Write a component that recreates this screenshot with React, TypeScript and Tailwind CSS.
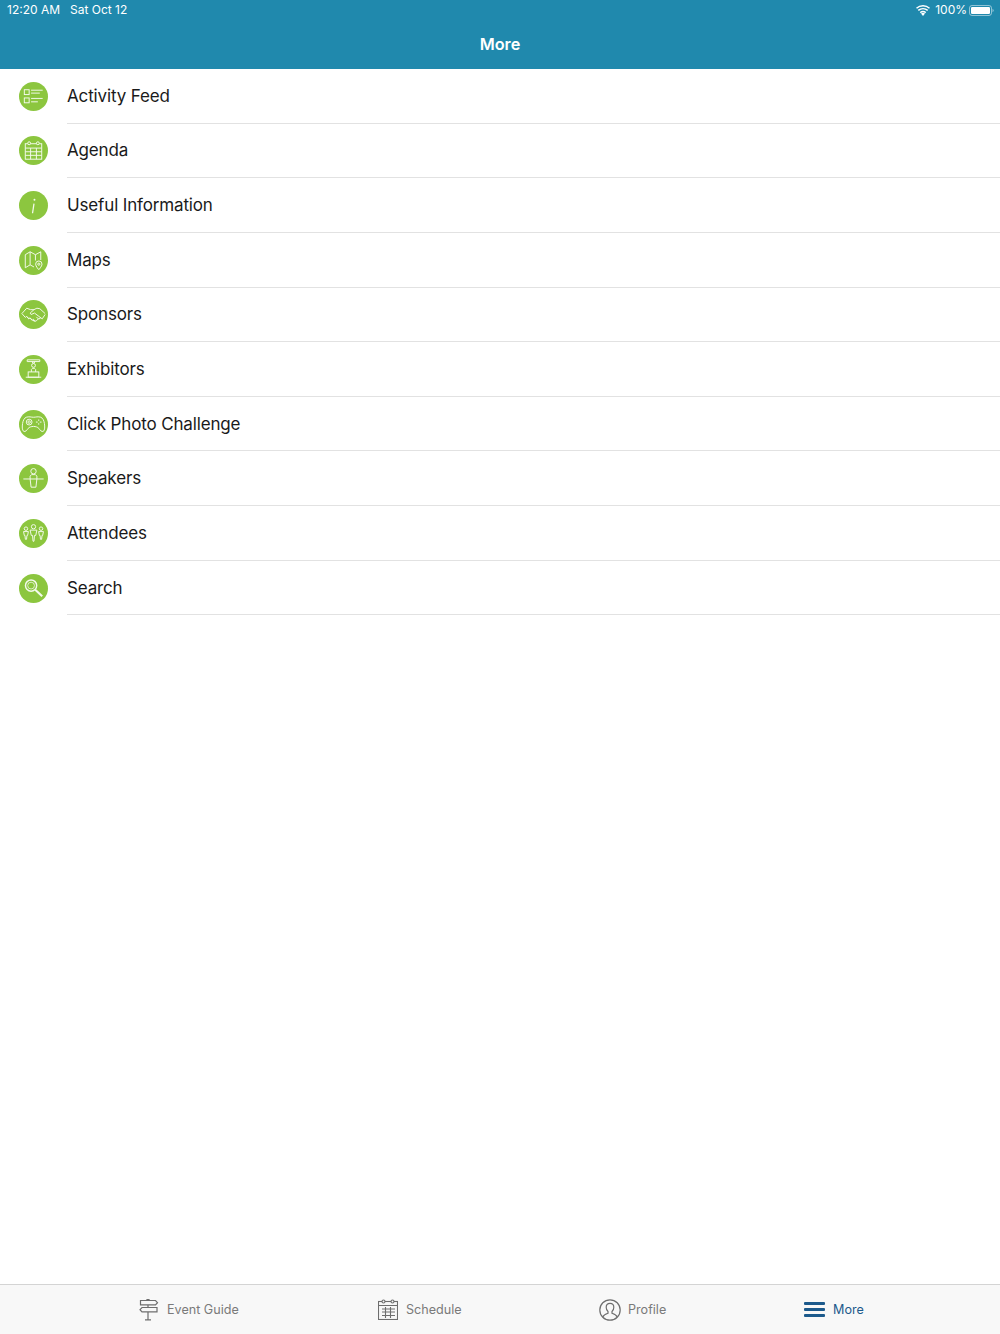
import React from "react";

const s = { fill: "none", stroke: "#fff", strokeWidth: 1, opacity: 0.9 };

function FeedIcon() {
  return (
    <g {...s}>
      <rect x="5.500" y="8" width="5" height="5" />
      <rect x="5.500" y="16.500" width="5" height="5" />
      <path d="M12.500 8.500h12M12.500 11.500h9M12.500 17h12M12.500 20.500h7" />
    </g>
  );
}

function AgendaIcon() {
  return (
    <g {...s}>
      <rect x="6.500" y="8" width="17" height="16" />
      <path d="M6.500 12.500h17M6.500 16.300h17M6.500 20h17M12 12.500v11.500M18 12.500v11.500" />
      <circle cx="10.500" cy="7.500" r="1.500" fill="#8cc63f" />
      <circle cx="19.500" cy="7.500" r="1.500" fill="#8cc63f" />
    </g>
  );
}

function InfoIcon() {
  return (
    <g>
      <path d="M15.500 13 L14 23" stroke="#fff" strokeWidth="1.300" opacity="0.9" fill="none" />
      <circle cx="16" cy="9" r="1" fill="#fff" opacity="0.9" />
    </g>
  );
}

function MapIcon() {
  return (
    <g {...s}>
      <path d="M6.500 9l5-3 5.500 3 5.500-3v8.500M6.500 9v13.500l5-3 4 2.200M11.500 6v13.500M17 9v6" />
      <path d="M20.500 15.500a3.300 3.300 0 0 1 3.300 3.300c0 2.200-3.300 5.700-3.300 5.700s-3.300-3.500-3.300-5.700a3.300 3.300 0 0 1 3.300-3.300z" />
      <circle cx="20.500" cy="18.800" r="1.100" />
    </g>
  );
}

function HandshakeIcon() {
  return (
    <g {...s}>
      <path d="M3 14l5-5.500 4 1.500h3.500l3-1.500 3 .5 5.500 5" />
      <path d="M15.500 10l-4 3.500 1 1.500 3.500-1.500 8 6 3-4.500" />
      <path d="M3 14l3.500 4 1.500-1 2 2.500 1.500-1 2 2.500 1.500-1 1.500 2 1.500-.5 2-2 2.500-1" />
      <path d="M8 17l2.500 2.500M11.500 18.500l2 2.500M14.500 20.500l1.500 2M18 17.500l2.500 2.500" />
    </g>
  );
}

function ExhibitorIcon() {
  return (
    <g {...s}>
      <path d="M8.500 5h13v1.800h-13zM13.500 6.800l.8 1.500h1.400l.8-1.500" />
      <circle cx="15" cy="10.800" r="2" />
      <path d="M12.800 17.500v-2.500l1.200-1.200h2l1.200 1.200v2.500" />
      <rect x="9.500" y="17.500" width="11" height="5.500" />
      <path d="M7 23h16" />
    </g>
  );
}

function GamepadIcon() {
  return (
    <g {...s}>
      <path d="M7.500 7.500c3-1 5 0 7.500 0s4.500-1 7.500 0c2.200.8 3.300 3.500 3.800 6.500.5 3.500.5 6.500-1 8-2 1-3.300-1-4.800-3-1-1.300-3.300-2-5.500-2s-4.500.7-5.500 2c-1.500 2-2.800 4-4.800 3-1.500-1.500-1.500-4.500-1-8 .5-3 1.600-5.700 3.800-6.500z" />
      <circle cx="10.500" cy="12.500" r="3" />
      <circle cx="10.500" cy="12.500" r="1.300" />
      <path d="M17.500 12.500h1.800M21.500 12.500h1.800M20.400 9.800v1.500M20.400 13.700v1.500" />
    </g>
  );
}

function SpeakerIcon() {
  return (
    <g {...s}>
      <circle cx="15" cy="7.500" r="2.800" />
      <path d="M11.500 15.500v-3l1.500-1.500h4l1.500 1.500v3M4.500 15.500h21M11.500 15.500l1 8.500h5l1-8.500" />
    </g>
  );
}

function AttendeesIcon() {
  return (
    <g {...s}>
      <circle cx="15" cy="8" r="2.200" />
      <path d="M11.500 11.500h7l-1.200 5.500h-1.300l-.5 6h-1l-.5-6h-1.300z" />
      <circle cx="7.200" cy="10" r="1.800" />
      <path d="M4.700 13h5l-.8 4h-.7l-.4 4h-1.200l-.4-4h-.7z" />
      <circle cx="22.800" cy="10" r="1.800" />
      <path d="M20.300 13h5l-.8 4h-.7l-.4 4h-1.200l-.4-4h-.7z" />
    </g>
  );
}

function SearchIcon() {
  return (
    <g fill="none" stroke="#fff" opacity="0.9">
      <circle cx="12.500" cy="12" r="5.800" strokeWidth="1.500" />
      <circle cx="12.500" cy="12" r="3.500" strokeWidth="0.800" />
      <path d="M16.800 16.300l7.200 6.700" strokeWidth="2.200" />
    </g>
  );
}

const items: [string, React.ReactNode][] = [
  ["Activity Feed", <FeedIcon />],
  ["Agenda", <AgendaIcon />],
  ["Useful Information", <InfoIcon />],
  ["Maps", <MapIcon />],
  ["Sponsors", <HandshakeIcon />],
  ["Exhibitors", <ExhibitorIcon />],
  ["Click Photo Challenge", <GamepadIcon />],
  ["Speakers", <SpeakerIcon />],
  ["Attendees", <AttendeesIcon />],
  ["Search", <SearchIcon />],
];

function Row({ label, icon }: { label: string; icon: React.ReactNode }) {
  return (
    <div className="flex h-[54.65px] items-stretch">
      <div className="flex w-[67px] shrink-0 items-center pl-[19px]">
        <svg width="29" height="29" viewBox="0 0 30 30" className="rounded-full bg-[#8cc63f]">
          {icon}
        </svg>
      </div>
      <div className="flex flex-1 items-center border-b border-[#e2e2e2] pt-[1.500px] text-[17px] tracking-[-0.15px] text-[#1a1a1a]">
        {label}
      </div>
    </div>
  );
}

function Tab({
  icon,
  label,
  active,
  className,
}: {
  icon: React.ReactNode;
  label: string;
  active?: boolean;
  className: string;
}) {
  return (
    <div className={`absolute top-0 flex h-full items-center ${className}`}>
      {icon}
      <span className={`pt-[2px] text-[12.600px] ${active ? "text-[#1c5a8c]" : "text-[#7a7a7a]"}`}>{label}</span>
    </div>
  );
}

export default function App() {
  return (
    <div className="flex h-[1334px] w-[1000px] flex-col bg-white font-['Inter',sans-serif]">
      <header className="h-[69px] shrink-0 bg-[#2089ad] text-white">
        <div className="flex h-5 items-center justify-between pl-[7px] pr-[6px] text-[12px]">
          <div className="flex gap-[10px]">
            <span>12:20 AM</span>
            <span>Sat Oct 12</span>
          </div>
          <div className="flex items-center">
            <svg width="14" height="11" viewBox="0 0 14 11" fill="#fff" className="mr-[5px]">
              <path d="M7 11l-2-2.400a3 3 0 0 1 4 0z" />
              <path d="M3.800 7.100a5 5 0 0 1 6.400 0l-.9 1.100a3.600 3.600 0 0 0-4.600 0z" />
              <path d="M1.800 4.800a8 8 0 0 1 10.400 0l-1 1.100a6.400 6.400 0 0 0-8.400 0z" />
              <path d="M0 2.700a10.500 10.500 0 0 1 14 0l-1 1.100a9 9 0 0 0-12 0z" />
            </svg>
            <span className="mr-[2px]">100%</span>
            <svg width="25" height="11" viewBox="0 0 25 11">
              <rect x="0.500" y="0.500" width="22" height="10" rx="2.500" fill="none" stroke="#fff" strokeOpacity="0.5" />
              <rect x="2" y="2" width="19" height="7" rx="1.200" fill="#fff" />
              <path d="M23.500 3.800a1.800 1.800 0 0 1 0 3.400z" fill="#fff" fillOpacity="0.5" />
            </svg>
          </div>
        </div>
        <div className="flex h-[49px] items-center justify-center pb-[1px] text-[16.300px] font-semibold">More</div>
      </header>
      <main className="flex-1">
        {items.map(([label, icon]) => (
          <Row key={label} label={label} icon={icon} />
        ))}
      </main>
      <footer className="relative h-[50px] shrink-0 border-t border-[#d4d4d4] bg-[#f8f8f8]">
        <Tab
          className="left-[139px]"
          label="Event Guide"
          icon={
            <svg width="20" height="22" viewBox="0 0 20 22" fill="none" stroke="#6e6e6e" strokeWidth="1.200" className="mr-[8px]">
              <path d="M1.500 1.500h15l2 2.200-2 2.200h-15zM18 8.500h-15l-2 2.200 2 2.200h15zM9 5.900v2.600M9 12.900v8M6 20.800h6M8 1.500v-1h2v1" />
            </svg>
          }
        />
        <Tab
          className="left-[378px]"
          label="Schedule"
          icon={
            <svg width="20" height="21" viewBox="0 0 20 21" fill="none" stroke="#6e6e6e" strokeWidth="1.100" className="mr-[8px]">
              <rect x="0.500" y="2.500" width="19" height="18" />
              <path d="M0.500 6.500h19M4 10h13M4 13h13M4 16.500h13M7.500 8v11M12.500 8v11" />
              <circle cx="5.500" cy="2.500" r="1.500" fill="#f8f8f8" />
              <circle cx="14.500" cy="2.500" r="1.500" fill="#f8f8f8" />
            </svg>
          }
        />
        <Tab
          className="left-[599px]"
          label="Profile"
          icon={
            <svg width="22" height="22" viewBox="0 0 22 22" fill="none" stroke="#6e6e6e" strokeWidth="1.200" className="mr-[7px]">
              <circle cx="11" cy="11" r="10.200" />
              <path d="M3.800 18c.8-2 2.700-3 5.200-3.800v-1.700c-1.200-1-1.800-2.500-1.800-4.300C7.200 5.800 8.800 4.300 11 4.300s3.800 1.500 3.800 3.900c0 1.800-.6 3.300-1.800 4.300v1.700c2.500.8 4.400 1.800 5.200 3.800" />
            </svg>
          }
        />
        <Tab
          className="left-[804px]"
          label="More"
          active
          icon={
            <div className="mr-[8px] flex h-[15px] w-[21px] flex-col justify-between">
              <div className="h-[3px] rounded-[1px] bg-[#1c5a8c]" />
              <div className="h-[3px] rounded-[1px] bg-[#1c5a8c]" />
              <div className="h-[3px] rounded-[1px] bg-[#1c5a8c]" />
            </div>
          }
        />
      </footer>
    </div>
  );
}
